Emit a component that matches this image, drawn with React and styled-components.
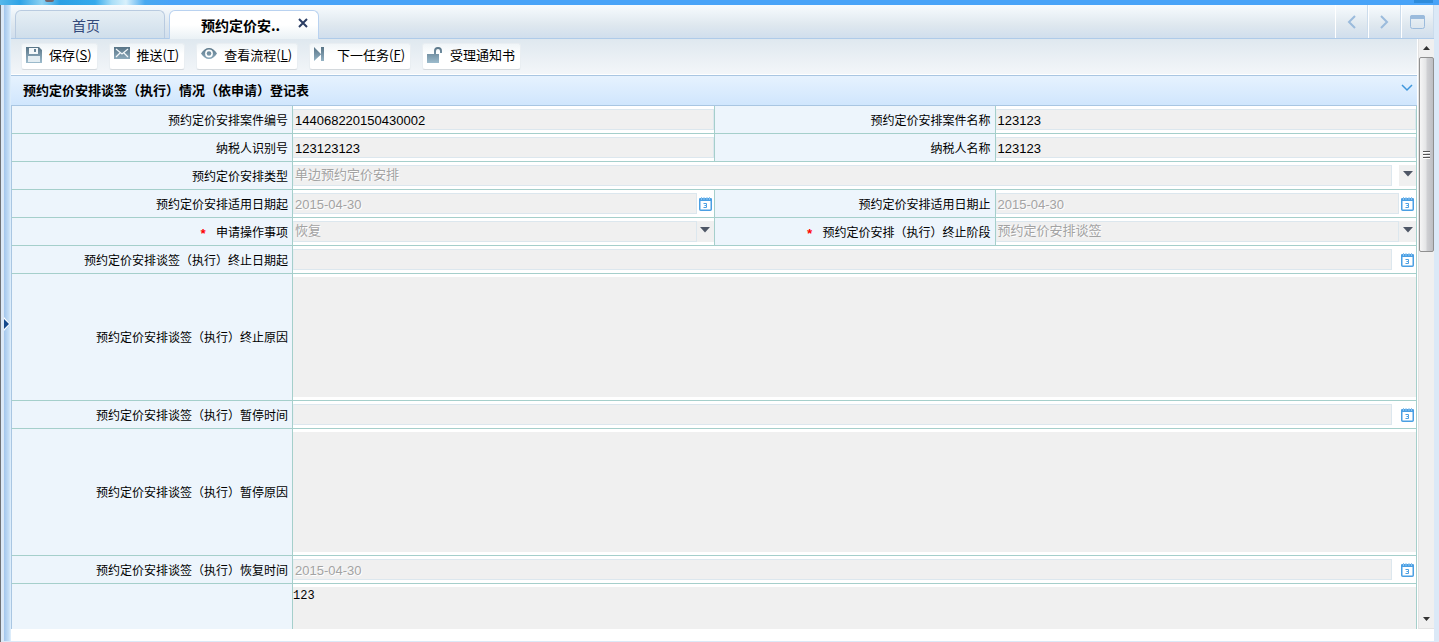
import React from "react";
import styled, { createGlobalStyle, css } from "styled-components";

const uiFont = '"Noto Sans CJK SC", sans-serif';
const grid = "#a5cfcb";

const GlobalStyle = createGlobalStyle`
  *, *::before, *::after { box-sizing: border-box; }
  html, body, #root { height: 100%; }
  body { margin: 0; overflow: hidden; background: #fff; color: #000; font: 12px/18px ${uiFont}; }
  button, input, select, textarea { font: inherit; color: inherit; margin: 0; border-radius: 0; }
`;

const Page = styled.div`
  display: flex;
  flex-direction: column;
  height: 100%;
`;

const Banner = styled.div`
  flex: none;
  display: flex;
  justify-content: space-between;
  height: 5px;
  padding-right: 6px;
  background: linear-gradient(90deg, #56b8ea 0, #2ea3e6 20px, #8ed2f2 42px, #2ba0e4 60px, #35aaec 95px, #a9def7 112px, #d8f0fb 126px, #48a9f0 145px, #48a3f8 170px);
`;

const BannerCloud = styled.span`
  width: 9px;
  height: 2px;
  margin-left: 45px;
  border-radius: 0 0 5px 5px;
  background: #74656b;
`;

const BannerMark = styled.span`
  width: 19px;
  height: 3px;
  background: #2f8cdc;
`;

const Workspace = styled.div`
  flex: 1;
  min-height: 0;
  display: flex;
  border-left: 1px solid #6f7276;
  background: #dce9f7;
  padding: 0 2px 1px 3px;
`;

const Splitter = styled.button`
  flex: none;
  display: flex;
  align-items: center;
  width: 7px;
  padding: 2px 0 0;
  border: 0;
  background: linear-gradient(90deg, #a3c6ec, #c6dff6 70%, #e2f0fc);
`;

const Main = styled.main`
  flex: 1;
  min-width: 0;
  display: flex;
  flex-direction: column;
  background: #fff;
  padding-bottom: 12px;
  border-right: 1px solid #dbe9f7;
  box-shadow: 2px 0 0 #dbe9f7;
  margin-right: 2px;
`;

const TabBar = styled.div`
  flex: none;
  display: flex;
  justify-content: space-between;
  height: 34px;
  border-bottom: 1px solid #afcbe9;
  background: linear-gradient(#f7fbfe, #dfe8ef 60%, #d0deed);
`;

const TabList = styled.nav`
  display: flex;
  gap: 4px;
  padding: 5px 0 0 4px;
`;

const Tab = styled.button`
  display: flex;
  align-items: center;
  justify-content: center;
  width: 150px;
  height: 28px;
  padding: 0 8px 0 0;
  border: 1px solid #b9cbe0;
  border-bottom: 0;
  border-radius: 6px 6px 0 0;
  background: linear-gradient(#e6eff5, #cfdeeb);
  color: #33497a;
  font-size: 14px;
  ${(p) =>
    p.$active &&
    css`
      height: 29px;
      justify-content: flex-end;
      gap: 18px;
      padding-right: 10px;
      border-color: #b9d2f0;
      background: linear-gradient(#fff 50%, #eaf1f5);
      color: #000;
      font-weight: bold;
    `}
`;

const TabTools = styled.div`
  display: flex;
`;

const TabTool = styled.button`
  display: flex;
  align-items: center;
  justify-content: center;
  width: 33px;
  padding: 0;
  border: 0;
  border-left: 1px solid #fff;
  border-right: 1px solid #ccdcec;
  background: transparent;
`;

const CloseIcon = styled.svg`
  margin-bottom: 4px;
`;

const Content = styled.div`
  flex: 1;
  min-height: 0;
  display: flex;
  gap: 1px;
`;

const Form = styled.form`
  flex: 1;
  min-width: 0;
  overflow: hidden;
`;

const Toolbar = styled.div`
  display: flex;
  align-items: flex-start;
  gap: 11px;
  height: 36px;
  padding: 4px 10px;
  border-bottom: 1px solid #fff;
  background: linear-gradient(#dfe8ef, #f3f6f9);
`;

const ToolButton = styled.button`
  display: flex;
  align-items: center;
  gap: 7px;
  height: 27px;
  padding: 0 5px 3px 4px;
  border: 1px solid #e9eef2;
  border-bottom-color: #d4d9dd;
  border-radius: 3px;
  background: linear-gradient(#f0f5f8, #fff 40%);
  font-size: 13px;
  white-space: nowrap;
`;

const PanelHeader = styled.header`
  display: flex;
  align-items: center;
  justify-content: space-between;
  height: 31px;
  padding: 0 4px 2px 12px;
  border: solid #a9c6e2;
  border-width: 1px 0;
  background: linear-gradient(#e6f2fe, #d0e6fd);
`;

const PanelTitle = styled.h1`
  margin: 0;
  font-size: 13px;
  line-height: 20px;
`;

const PanelToggle = styled.button`
  display: flex;
  padding: 0 0 3px;
  border: 0;
  background: transparent;
`;

const FormTable = styled.table`
  width: 100%;
  table-layout: fixed;
  border-collapse: separate;
  border-spacing: 0;
  border-right: 1px solid ${grid};
`;

const LabelCol = styled.col`
  width: 20%;
`;

const FieldCol = styled.col`
  width: 30%;
`;

const LabelCell = styled.th`
  padding: 0 4px 0 0;
  border-left: 1px solid ${(p) => (p.$first ? "#a9c6e2" : grid)};
  border-bottom: 1px solid ${grid};
  background: #edf5fc;
  font-weight: normal;
  text-align: right;
  white-space: nowrap;
`;

const Required = styled.span`
  margin-right: 9px;
  color: #f00;
  font: bold 13px/12px "Liberation Mono", monospace;
  vertical-align: -1px;
`;

const FieldCell = styled.td`
  padding: 3px 0;
  border-left: 1px solid ${grid};
  border-bottom: 1px solid ${grid};
`;

const FieldRow = styled.div`
  display: flex;
  height: 21px;
`;

const control = css`
  flex: 1;
  min-width: 0;
  height: 21px;
  border: 1px solid #dce7ee;
  border-left-color: #e8eef2;
  background: #f0f0f0;
  opacity: 1;
  outline: 0;
  &:disabled {
    color: #a3a3a3;
    text-shadow: 1px 1px #fff;
  }
`;

const TextInput = styled.input`
  ${control}
  padding: 2px 1px 0;
  font: 13px/17px "Liberation Sans", ${uiFont};
`;

const Select = styled.select`
  ${control}
  appearance: none;
  padding: 0 1px 4px;
  font-size: 13px;
  line-height: 15px;
`;

const TextArea = styled.textarea`
  display: block;
  width: 100%;
  height: 120px;
  padding: 1px 0;
  border: 0;
  outline: 0;
  resize: none;
  background: #f0f0f0;
  font: 12px/16px "Liberation Mono", monospace;
`;

const Trigger = styled.button`
  flex: none;
  display: flex;
  align-items: center;
  justify-content: center;
  width: 17px;
  padding: ${(p) => (p.$filled ? "0 0 4px" : "0")};
  margin-left: ${(p) => (p.$wide ? "7px" : "0")};
  border: 0;
  background: ${(p) => (p.$filled ? "#f0f0f0" : "transparent")};
`;

const ScrollTrack = styled.div`
  flex: none;
  display: flex;
  flex-direction: column;
  justify-content: space-between;
  width: 16px;
  border: solid #e3e3e3;
  border-width: 0 0 1px 1px;
  background: #f0f0f0;
`;

const ScrollArrow = styled.button`
  display: flex;
  align-items: center;
  justify-content: center;
  height: 18px;
  padding: 0;
  border: 0;
  background: transparent;
`;

const ScrollThumb = styled.div`
  display: flex;
  align-items: center;
  justify-content: center;
  height: 195px;
  margin-bottom: auto;
  border: 1px solid #909090;
  border-radius: 2px;
  background: linear-gradient(90deg, #f6f6f6, #e4e5e6 45%, #cfd0d3 55%, #bdbec2);
`;

const Defs = () => (
  <defs>
    <linearGradient id="steel" x1="0" y1="0" x2="0" y2="16" gradientUnits="userSpaceOnUse">
      <stop offset="0" stopColor="#587486" />
      <stop offset="1" stopColor="#9dbccd" />
    </linearGradient>
  </defs>
);

const ToolIcon = ({ children }) => (
  <svg width="16" height="16" viewBox="0 0 16 16" fill="url(#steel)" aria-hidden="true">
    <Defs />
    {children}
  </svg>
);

const SaveIcon = () => (
  <ToolIcon>
    <path fillRule="evenodd" d="M0 0H13L16 3V16H0ZM3 1V7H12V1ZM2 9V15H14V9Z" />
    <path d="M3 1H12V7H3Z" fill="#f4f8fa" />
    <path d="M8 2H10V5H8Z" />
    <path d="M2 9H14V15H2Z" fill="#e3edf2" />
  </ToolIcon>
);

const MailIcon = () => (
  <ToolIcon>
    <path d="M0 0H16V12H0Z" />
    <path d="M2 2L8 7L14 2M2 10L6 6M14 10L10 6" fill="none" stroke="#f2f7fa" strokeWidth="1.2" />
  </ToolIcon>
);

const EyeIcon = () => (
  <ToolIcon>
    <path fillRule="evenodd" d="M0 6.5C2 3 5 1 8 1S14 3 16 6.5C14 10 11 12 8 12S2 10 0 6.5ZM8 2.6A3.9 3.9 0 1 0 8 10.4A3.9 3.9 0 1 0 8 2.6Z" />
    <circle cx="8" cy="6.5" r="2.3" />
  </ToolIcon>
);

const NextIcon = () => (
  <ToolIcon>
    <path d="M0 0L7 7V0H10V14H7V7.5L0 14Z" />
  </ToolIcon>
);

const UnlockIcon = () => (
  <ToolIcon>
    <path d="M0 7H7V4Q7 0 11 0T15 4V6H13V4Q13 2 11 2T9 4V7H12V16H0Z" />
  </ToolIcon>
);

const CalendarIcon = () => (
  <svg width="13" height="14" viewBox="0 0 13 14" aria-hidden="true">
    <rect x="0.75" y="1.75" width="11.5" height="11.5" rx="1" fill="#fff" stroke="#4a9fe3" strokeWidth="1.5" />
    <path d="M0 1.5H13V4H0Z" fill="#4a9fe3" />
    <path d="M2.5 0V3M5 0V3M8 0V3M10.5 0V3" stroke="#8cc4f0" />
    <path d="M4.5 6.5H7.5V8.5H5.5M7.5 8.5V10.5H4.5" fill="none" stroke="#4a9fe3" />
  </svg>
);

const Caret = () => (
  <svg width="10" height="6" viewBox="0 0 10 6" aria-hidden="true">
    <path d="M0 0H10L5 5.5Z" fill="#4f5766" />
  </svg>
);

const tools = [
  { text: "保存", hotkey: "S", Icon: SaveIcon },
  { text: "推送", hotkey: "T", Icon: MailIcon },
  { text: "查看流程", hotkey: "L", Icon: EyeIcon },
  { text: "下一任务", hotkey: "F", Icon: NextIcon },
  { text: "受理通知书", Icon: UnlockIcon },
];

const rows = [
  [
    { id: "caseNo", label: "预约定价安排案件编号", kind: "text", value: "144068220150430002" },
    { id: "caseName", label: "预约定价安排案件名称", kind: "text", value: "123123" },
  ],
  [
    { id: "taxpayerNo", label: "纳税人识别号", kind: "text", value: "123123123" },
    { id: "taxpayerName", label: "纳税人名称", kind: "text", value: "123123" },
  ],
  [{ id: "type", label: "预约定价安排类型", kind: "select", value: "单边预约定价安排" }],
  [
    { id: "validFrom", label: "预约定价安排适用日期起", kind: "date", value: "2015-04-30" },
    { id: "validTo", label: "预约定价安排适用日期止", kind: "date", value: "2015-04-30" },
  ],
  [
    { id: "action", label: "申请操作事项", kind: "select", value: "恢复", required: true },
    { id: "stage", label: "预约定价安排（执行）终止阶段", kind: "select", value: "预约定价安排谈签", required: true },
  ],
  [{ id: "endDate", label: "预约定价安排谈签（执行）终止日期起", kind: "date", value: "" }],
  [{ id: "endReason", label: "预约定价安排谈签（执行）终止原因", kind: "area", value: "" }],
  [{ id: "pauseDate", label: "预约定价安排谈签（执行）暂停时间", kind: "date", value: "" }],
  [{ id: "pauseReason", label: "预约定价安排谈签（执行）暂停原因", kind: "area", value: "" }],
  [{ id: "resumeDate", label: "预约定价安排谈签（执行）恢复时间", kind: "date", value: "2015-04-30" }],
  [{ id: "resumeReason", name: "恢复原因", kind: "area", value: "123" }],
];

function Field({ field, wide }) {
  const { id, kind, value, name } = field;
  if (kind === "area") return <TextArea id={id} aria-label={name} defaultValue={value} readOnly />;
  if (kind === "text")
    return (
      <FieldRow>
        <TextInput id={id} defaultValue={value} readOnly />
      </FieldRow>
    );
  if (kind === "select")
    return (
      <FieldRow>
        <Select id={id} disabled defaultValue={value}>
          <option>{value}</option>
        </Select>
        <Trigger type="button" $filled $wide={wide} aria-label="展开">
          <Caret />
        </Trigger>
      </FieldRow>
    );
  return (
    <FieldRow>
      <TextInput id={id} disabled defaultValue={value} />
      <Trigger type="button" $wide={wide} aria-label="选择日期">
        <CalendarIcon />
      </Trigger>
    </FieldRow>
  );
}

export default function App() {
  return (
    <Page>
      <GlobalStyle />
      <Banner>
        <BannerCloud />
        <BannerMark />
      </Banner>
      <Workspace>
        <Splitter type="button" aria-label="展开侧栏">
          <svg width="6" height="14" viewBox="0 0 6 14" aria-hidden="true">
            <path d="M0 0L6 7L0 14Z" fill="#fff" />
            <path d="M0 2L5 7L0 12Z" fill="#15498c" />
          </svg>
        </Splitter>
        <Main>
          <TabBar>
            <TabList>
              <Tab type="button">首页</Tab>
              <Tab type="button" $active>
                预约定价安..
                <CloseIcon width="10" height="10" viewBox="0 0 10 10" aria-hidden="true">
                  <path d="M1 1L9 9M9 1L1 9" stroke="#2b3d63" strokeWidth="2" />
                </CloseIcon>
              </Tab>
            </TabList>
            <TabTools>
              <TabTool type="button" aria-label="向左">
                <svg width="9" height="14" viewBox="0 0 9 14" fill="none" stroke="#9bbbdc" strokeWidth="2">
                  <path d="M8 1L2 7L8 13" />
                </svg>
              </TabTool>
              <TabTool type="button" aria-label="向右">
                <svg width="9" height="14" viewBox="0 0 9 14" fill="none" stroke="#9bbbdc" strokeWidth="2">
                  <path d="M1 1L7 7L1 13" />
                </svg>
              </TabTool>
              <TabTool type="button" aria-label="最大化">
                <svg width="15" height="14" viewBox="0 0 15 14">
                  <rect x="0.5" y="0.5" width="14" height="13" rx="2" fill="none" stroke="#9bbbdc" />
                  <path d="M0 2Q0 0 2 0H13Q15 0 15 2V4H0Z" fill="#9bbbdc" />
                </svg>
              </TabTool>
            </TabTools>
          </TabBar>
          <Content>
            <Form>
              <Toolbar>
                {tools.map(({ text, hotkey, Icon }) => (
                  <ToolButton key={text} type="button">
                    <Icon />
                    <span>
                      {text}
                      {hotkey && (
                        <>
                          (<u>{hotkey}</u>)
                        </>
                      )}
                    </span>
                  </ToolButton>
                ))}
              </Toolbar>
              <PanelHeader>
                <PanelTitle>预约定价安排谈签（执行）情况（依申请）登记表</PanelTitle>
                <PanelToggle type="button" aria-label="折叠">
                  <svg width="12" height="8" viewBox="0 0 12 8" fill="none" stroke="#3f97dc" strokeWidth="1.5">
                    <path d="M1 1L6 6L11 1" />
                  </svg>
                </PanelToggle>
              </PanelHeader>
              <FormTable>
                <colgroup>
                  <LabelCol />
                  <FieldCol />
                  <LabelCol />
                  <FieldCol />
                </colgroup>
                <tbody>
                  {rows.map((fields) => (
                    <tr key={fields[0].id}>
                      {fields.map((field, i) => (
                        <React.Fragment key={field.id}>
                          <LabelCell scope="row" $first={i === 0}>
                            {field.required && <Required>*</Required>}
                            {field.label && <label htmlFor={field.id}>{field.label}</label>}
                          </LabelCell>
                          <FieldCell colSpan={fields.length === 1 ? 3 : 1}>
                            <Field field={field} wide={fields.length === 1} />
                          </FieldCell>
                        </React.Fragment>
                      ))}
                    </tr>
                  ))}
                </tbody>
              </FormTable>
            </Form>
            <ScrollTrack>
              <ScrollArrow type="button" aria-label="向上滚动">
                <svg width="7" height="4" viewBox="0 0 7 4">
                  <path d="M3.5 0L7 4H0Z" fill="#333" />
                </svg>
              </ScrollArrow>
              <ScrollThumb>
                <svg width="7" height="8" viewBox="0 0 7 8">
                  <path d="M0 0.5H7M0 3.5H7M0 6.5H7" stroke="#555" />
                  <path d="M0 1.5H7M0 4.5H7M0 7.5H7" stroke="#fff" />
                </svg>
              </ScrollThumb>
              <ScrollArrow type="button" aria-label="向下滚动">
                <svg width="7" height="4" viewBox="0 0 7 4">
                  <path d="M0 0H7L3.5 4Z" fill="#333" />
                </svg>
              </ScrollArrow>
            </ScrollTrack>
          </Content>
        </Main>
      </Workspace>
    </Page>
  );
}
